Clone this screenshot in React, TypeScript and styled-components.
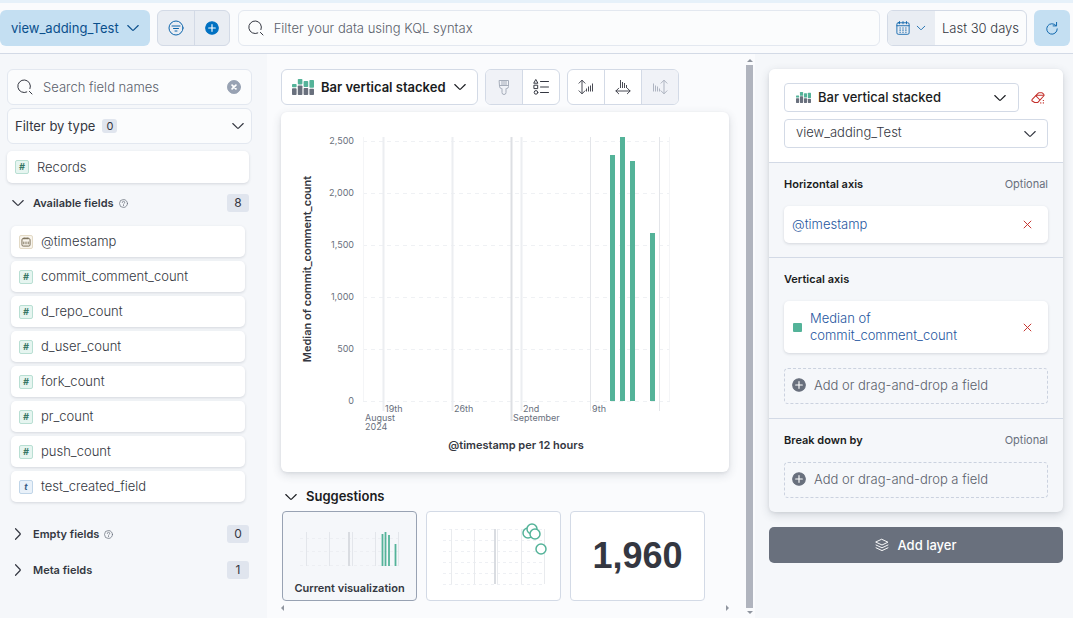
import React from "react";
import styled, { createGlobalStyle, css } from "styled-components";

const color = {
  text: "#343741",
  title: "#1a1c21",
  subdued: "#69707d",
  link: "#1f57a0",
  blue: "#0b64ab",
  border: "#d3dae6",
  page: "#f5f7fa",
  canvas: "#fafbfd",
  green: "#54b399",
  danger: "#c4302b",
};

const GlobalStyle = createGlobalStyle`
  *, *::before, *::after { box-sizing: border-box; }
  body {
    margin: 0;
    background: ${color.page};
    color: ${color.text};
    font-family: Inter, "Liberation Sans", sans-serif;
    font-size: 13px;
    font-weight: 300;
    line-height: 17px;
  }
  button, input, select { font: inherit; color: inherit; margin: 0; }
  button { cursor: pointer; padding: 0; border: 0; background: none; }
  h2, h3, ul { margin: 0; padding: 0; font: inherit; }
  ul { list-style: none; }
  svg { display: block; flex: none; }
`;

/* ---------- icons ---------- */

type IconProps = { size?: number; tone?: string };

const Stroke = styled.svg.attrs({ viewBox: "0 0 16 16", fill: "none", "aria-hidden": true })<{
  $size?: number;
  $tone?: string;
}>`
  width: ${(p) => p.$size ?? 16}px;
  height: ${(p) => p.$size ?? 16}px;
  color: ${(p) => p.$tone ?? "inherit"};
  stroke: currentColor;
  stroke-linecap: round;
  stroke-linejoin: round;
`;

const ChevronDown = ({ size = 14, tone }: IconProps) => (
  <Stroke $size={size} $tone={tone} strokeWidth={1.35}>
    <path d="M2 5.2l5.4 5.2a.9.9 0 0 0 1.2 0L14 5.2" />
  </Stroke>
);

const ChevronRight = ({ size = 14, tone }: IconProps) => (
  <Stroke $size={size} $tone={tone} strokeWidth={1.35}>
    <path d="M5.2 2l5.2 5.4a.9.9 0 0 1 0 1.2L5.2 14" />
  </Stroke>
);

const SearchIcon = () => (
  <Stroke $size={16} strokeWidth={1}>
    <path d="M9.8 13A6.3 6.3 0 1 1 13 9.6M12.4 12.4l2.6 2.6" />
  </Stroke>
);

const FilterIcon = () => (
  <Stroke $size={16} $tone={color.blue} strokeWidth={1}>
    <circle cx="8" cy="8" r="7" />
    <path d="M4 6h8M5.5 8.5h5M7 11h2" />
  </Stroke>
);

const PlusCircle = ({ size = 14, tone }: IconProps) => (
  <Stroke $size={size} $tone={tone} strokeWidth={1.3}>
    <circle cx="8" cy="8" r="7.2" fill="currentColor" />
    <path d="M8 4.2v7.6M4.2 8h7.6" stroke="#fff" />
  </Stroke>
);

const ClearIcon = () => (
  <Stroke $size={14} $tone="#98a2b3" strokeWidth={1}>
    <circle cx="8" cy="8" r="7.5" fill="currentColor" />
    <path d="M5.8 5.8l4.4 4.4M10.2 5.8l-4.4 4.4" stroke="#fff" strokeWidth={2} />
  </Stroke>
);

const CalendarIcon = () => (
  <Stroke $size={14} $tone={color.blue} strokeWidth={1}>
    <rect x="1" y="2" width="14" height="13.2" rx="1.6" />
    <path d="M1 5.4h14M4 .6v2.6M8 .6v2.6M12 .6v2.6" />
    <path
      d="M4 8h1.4M7.3 8h1.4M10.6 8H12M4 10.4h1.4M7.3 10.4h1.4M10.6 10.4H12M4 12.8h1.4M7.3 12.8h1.4M10.6 12.8H12"
      strokeLinecap="butt"
      strokeWidth={1.3}
    />
  </Stroke>
);

const RefreshIcon = () => (
  <Stroke $size={14} $tone={color.blue} strokeWidth={1.1}>
    <path d="M12.6 5.2A6 6 0 1 0 14 9M13.2 1.6v4H9.3" />
  </Stroke>
);

const HelpIcon = () => (
  <Stroke $size={9} $tone={color.subdued} strokeWidth={1.3}>
    <circle cx="8" cy="8" r="7.1" />
    <path d="M5.8 6.2A2.2 2.2 0 1 1 8.8 8.2c-.6.3-.8.6-.8 1.2M8 11.4v.6" />
  </Stroke>
);

const BrushIcon = () => (
  <Stroke $size={16} strokeWidth={1}>
    <path d="M3.5 1.5h9v6a2 2 0 0 1-2 2h-.5v4a2 2 0 0 1-4 0v-4h-.5a2 2 0 0 1-2-2zM3.5 6.5h9M6 1.5v5M8 1.5v5M10 1.5v5" />
  </Stroke>
);

const LegendIcon = () => (
  <Stroke $size={16} strokeWidth={1}>
    <path d="M7.5 2.5h8M7.5 8h8M7.5 13.5h8" />
    <path d="M3 .8l1.9 3.4H1.1zM1.3 6.2h3.4v3.4H1.3z" />
    <circle cx="3" cy="13.4" r="1.8" />
  </Stroke>
);

const AxisLeftIcon = () => (
  <Stroke $size={16} strokeWidth={0.9}>
    <path d="M4 1.5v13M1 4.2L4 1.2l3 3M1 11.8l3 3 3-3" />
    <path d="M8.5 9.5v3M10.5 7.5v5M12.5 6.5v6M14.5 4.5v8" strokeLinecap="butt" />
  </Stroke>
);

const AxisBottomIcon = () => (
  <Stroke $size={16} strokeWidth={0.9}>
    <path d="M1 12h14M3.7 9.2L.9 12l2.8 2.8M12.3 9.2l2.8 2.8-2.8 2.8" />
    <path d="M5.5 1v8M7.5 3v6M9.5 4v5M11.5 6v3" strokeLinecap="butt" />
  </Stroke>
);

const AxisRightIcon = () => (
  <Stroke $size={16} strokeWidth={0.9}>
    <path d="M12 1.5v13M9 4.2l3-3 3 3M9 11.8l3 3 3-3" />
    <path d="M1.5 4.5v8M3.5 6.5v6M5.5 7.5v5M7.5 9.5v3" strokeLinecap="butt" />
  </Stroke>
);

const EraserIcon = () => (
  <Stroke $size={14} $tone={color.danger} strokeWidth={1.2}>
    <path d="M1.4 9.6L8 2.6a1.6 1.6 0 0 1 1.100-.5h3.200a1.600 1.600 0 0 1 1.200.5l1 1.200a1.400 1.400 0 0 1 0 1.900L7.600 13.200H4.200L1.400 11.500a1.300 1.300 0 0 1 0-1.900z" />
    <path d="M6.200 4.800h8M5.600 5.600l4.400 4.400" />
    <path d="M11 13.600h.3M14 13.600h.3M14 10.800h.3" strokeWidth={1.3} />
  </Stroke>
);

const CrossIcon = () => (
  <Stroke $size={11} $tone={color.danger} strokeWidth={1.4}>
    <path d="M3 3l10 10M13 3L3 13" />
  </Stroke>
);

const LayersIcon = () => (
  <Stroke $size={14} strokeWidth={1.1}>
    <path d="M8 1.6l6.8 3.2L8 8 1.2 4.8zM1.2 8L8 11.2 14.8 8M1.2 11.2L8 14.4l6.8-3.2" />
  </Stroke>
);

const StackedBarIcon = ({ width }: { width: number }) => (
  <svg width={width} viewBox="0 0 22 16" aria-hidden="true">
    <g fill={color.green}>
      <rect x="0" y="5" width="4.6" height="3.2" rx=".8" />
      <rect x="5.8" y="0" width="4.6" height="5.4" rx=".8" />
      <rect x="11.6" y="2" width="4.6" height="6" rx=".8" />
      <rect x="17.4" y="1" width="4.6" height="7.8" rx=".8" />
    </g>
    <g fill={color.subdued}>
      <rect x="0" y="9.2" width="4.6" height="6.8" rx=".8" />
      <rect x="5.8" y="6.4" width="4.6" height="9.6" rx=".8" />
      <rect x="11.6" y="9" width="4.6" height="7" rx=".8" />
      <rect x="17.4" y="9.8" width="4.6" height="6.2" rx=".8" />
    </g>
  </svg>
);

/* ---------- top bar ---------- */

const TopBar = styled.header`
  display: flex;
  gap: 7px;
  padding: 7px 3px 7px 0;
  border-top: 3px solid #e6f1fa;
  border-bottom: 1px solid ${color.border};
  background: ${color.canvas};
`;

const DataViewButton = styled.button`
  display: flex;
  align-items: center;
  gap: 7px;
  height: 36px;
  padding: 0 10px 0 11px;
  border-radius: 6px;
  background: #c4dff2;
  color: #0a4f8c;
  font-weight: 400;
`;

const SplitGroup = styled.div`
  display: flex;
  height: 36px;
  border: 1px solid ${color.border};
  border-radius: 6px;
  background: #e9edf3;
  overflow: hidden;
`;

const SplitButton = styled.button<{ $divided?: boolean }>`
  display: grid;
  place-items: center;
  width: ${(p) => (p.$divided ? 35 : 36)}px;
  ${(p) => p.$divided && css`border-left: 1px solid ${color.border};`}
`;

const SearchBox = styled.label<{ $grow?: boolean }>`
  display: flex;
  align-items: center;
  gap: 10px;
  height: 36px;
  padding: 0 10px 0 9px;
  border: 1px solid #e3e8f0;
  border-radius: 6px;
  background: #fbfcfd;
  ${(p) => p.$grow && css`flex: 1; margin-left: 1px;`}
`;

const SearchInput = styled.input`
  flex: 1;
  min-width: 0;
  padding: 0;
  border: 0;
  outline: 0;
  background: none;
  &::placeholder { color: #5a606b; opacity: 1; }
`;

const DateGroup = styled.div`
  display: flex;
  height: 36px;
  border: 1px solid ${color.border};
  border-radius: 6px;
  background: #fbfcfd;
  overflow: hidden;
`;

const DateQuick = styled.button`
  display: flex;
  align-items: center;
  gap: 6px;
  padding: 0 9px 0 8px;
  background: #e9edf3;
`;

const DateText = styled.button`
  padding: 0 7px;
`;

const RefreshButton = styled.button`
  display: grid;
  place-items: center;
  width: 36px;
  height: 36px;
  border-radius: 6px;
  background: #c4dff2;
`;

/* ---------- page columns ---------- */

const Columns = styled.main`
  display: grid;
  grid-template-columns: 267px minmax(0, 1fr) 9px 318px;
  min-height: calc(100vh - 54px);
`;

/* ---------- field list ---------- */

const FieldPanel = styled.aside`
  padding: 15px 15px 15px 7px;
`;

const FilterByType = styled.button`
  display: flex;
  align-items: center;
  width: 100%;
  height: 36px;
  margin: 3px 0 7px;
  padding: 0 6px 0 7px;
  border: 1px solid #e3e8f0;
  border-radius: 6px;
  background: #fbfcfd;
  font-weight: 400;
  svg { margin-left: auto; }
`;

const SmallBadge = styled.span`
  width: 15px;
  margin-left: 7px;
  border-radius: 3px;
  background: #e0e5ee;
  font-size: 11px;
  line-height: 14px;
  text-align: center;
`;

const FieldButton = styled.button<{ $nested?: boolean }>`
  display: flex;
  align-items: center;
  gap: 8px;
  width: ${(p) => (p.$nested ? "100%" : "calc(100% - 3px)")};
  height: ${(p) => (p.$nested ? 31 : 32)}px;
  padding: 0 8px;
  border-radius: 5px;
  background: #fff;
  box-shadow: 0 1px 3px rgba(40, 50, 70, 0.16);
`;

const FieldListItems = styled.ul`
  display: grid;
  gap: 4px;
  padding: 13px 7px 12px 4px;
`;

const tokenTones = {
  number: { fg: "#387765", bg: "#e6f5f0", line: "#b9dfd3" },
  date: { fg: "#7b705a", bg: "#f8f4ec", line: "#e3dac6" },
  text: { fg: "#3d5f86", bg: "#e9f1f9", line: "#c0d5e8" },
};

const Token = styled.span<{ $kind: keyof typeof tokenTones }>`
  display: grid;
  place-items: center;
  width: 14px;
  height: 14px;
  border: 1px solid ${(p) => tokenTones[p.$kind].line};
  border-radius: 2px;
  background: ${(p) => tokenTones[p.$kind].bg};
  color: ${(p) => tokenTones[p.$kind].fg};
  font-size: 9px;
  font-style: italic;
  font-weight: 700;
  line-height: 12px;
`;

const DateToken = () => (
  <Stroke $size={10} strokeWidth={1.6}>
    <rect x="1.5" y="2.5" width="13" height="12" rx="2" />
    <path d="M5 1v2M8 1v2M11 1v2M4.5 8v3M8 8v3M11.5 8v3" />
  </Stroke>
);

const GroupHeader = styled.button<{ $spaced?: boolean }>`
  display: flex;
  align-items: center;
  width: calc(100% - 3px);
  height: 20px;
  margin-top: ${(p) => (p.$spaced ? 16 : 10)}px;
  padding: 0 0 0 4px;
`;

const GroupTitle = styled.span`
  margin: 0 5px 0 8px;
  font-size: 11px;
  font-weight: 600;
`;

const CountBadge = styled.span`
  width: 22px;
  margin-left: auto;
  border-radius: 3px;
  background: #e0e5ee;
  font-size: 12px;
  font-weight: 400;
  line-height: 18px;
  text-align: center;
`;

/* ---------- visualization ---------- */

const Workspace = styled.section`
  padding: 15px 17px 0 14px;
  background: ${color.canvas};
  min-width: 0;
`;

const Toolbar = styled.div`
  display: flex;
  gap: 7px;
  margin-bottom: 7px;
`;

const ChartTypeButton = styled.button<{ $compact?: boolean }>`
  display: flex;
  align-items: center;
  gap: 7px;
  height: ${(p) => (p.$compact ? 29 : 36)}px;
  padding: 0 ${(p) => (p.$compact ? 11 : 10)}px;
  border: 1px solid ${color.border};
  border-radius: ${(p) => (p.$compact ? 4 : 6)}px;
  background: #fff;
  color: ${color.title};
  font-weight: ${(p) => (p.$compact ? 500 : 600)};
  ${(p) => p.$compact && css`flex: 1;`}
  svg:last-child { margin-left: ${(p) => (p.$compact ? "auto" : "0")}; }
`;

const ToolGroup = styled.div`
  display: flex;
  height: 36px;
  border: 1px solid ${color.border};
  border-radius: 6px;
  background: #fff;
  overflow: hidden;
`;

const ToolButton = styled.button`
  display: grid;
  place-items: center;
  width: 36px;
  color: ${color.text};
  & + & { width: 37px; border-left: 1px solid ${color.border}; }
  &:disabled { background: #f0f2f7; color: #a6adba; }
`;

const ChartPanel = styled.div`
  border-radius: 6px;
  background: #fff;
  box-shadow: 0 3px 10px rgba(50, 60, 80, 0.16), 0 1px 3px rgba(50, 60, 80, 0.08);
`;

const ChartSvg = styled.svg`
  width: 100%;
  height: 360px;
  font-size: 9px;
  font-weight: 400;
  fill: ${color.subdued};
`;

const AxisTitle = styled.text`
  font-size: 11px;
  font-weight: 600;
  fill: #343741;
  text-anchor: middle;
`;

const bars = [
  { x: 329, value: 2365 },
  { x: 339, value: 2540 },
  { x: 349, value: 2308 },
  { x: 369, value: 1612 },
];
const yTicks = [0, 500, 1000, 1500, 2000, 2500];
const yFor = (value: number) => Math.round(289 - (value * 260) / 2500);

const Chart = () => (
  <ChartSvg viewBox="0 0 448 360" role="img" aria-label="Median of commit_comment_count by @timestamp per 12 hours">
    {yTicks.map((tick) => (
      <g key={tick}>
        <path d={`M82 ${yFor(tick) + 0.5}H389`} stroke="#eff1f4" strokeDasharray="4 4" />
        <text x="73" y={yFor(tick) + 3} textAnchor="end">{tick.toLocaleString("en-US")}</text>
      </g>
    ))}
    <path d="M82.5 25V289M388.5 25V289" stroke="#f4f5f7" />
    <path d="M102.5 25V299M171.5 25V299M240.5 25V299" stroke="#eceef1" strokeWidth="2" />
    <path d="M309.5 25V299M378.5 25V299" stroke="#e3e5e9" />
    <path d="M230.5 25V309" stroke="#dddfe3" strokeWidth="2" />
    {bars.map((bar) => (
      <rect key={bar.x} x={bar.x} y={yFor(bar.value)} width="5" height={289 - yFor(bar.value)} fill={color.green} />
    ))}
    <text x="104" y="300">19th</text>
    <text x="173" y="300">26th</text>
    <text x="242" y="300">2nd</text>
    <text x="311" y="300">9th</text>
    <text x="84" y="309">August</text>
    <text x="84" y="318">2024</text>
    <text x="232" y="309">September</text>
    <AxisTitle x="235" y="337">@timestamp per 12 hours</AxisTitle>
    <AxisTitle transform="translate(30 157) rotate(-90)">Median of commit_comment_count</AxisTitle>
  </ChartSvg>
);

const SuggestionsHeader = styled.button`
  display: flex;
  align-items: center;
  gap: 8px;
  margin: 16px 0 6px 3px;
  color: ${color.title};
  font-weight: 600;
`;

const SuggestionList = styled.div`
  display: flex;
  gap: 9px;
  padding-left: 1px;
`;

const SuggestionCard = styled.button<{ $selected?: boolean }>`
  display: grid;
  place-items: center;
  align-content: ${(p) => (p.$selected ? "end" : "center")};
  width: 135px;
  height: 90px;
  border: 1px solid ${(p) => (p.$selected ? "#98a2b3" : color.border)};
  border-radius: 4px;
  background: ${(p) => (p.$selected ? color.page : "#fff")};
`;

const SuggestionLabel = styled.span`
  padding-bottom: 3px;
  font-size: 11px;
  font-weight: 600;
`;

const Metric = styled.strong`
  color: ${color.text};
  font-family: "Liberation Sans", Arial, sans-serif;
  font-size: 36px;
  font-weight: 700;
  line-height: 40px;
`;

const MiniBars = () => (
  <svg width="100" height="48" viewBox="0 0 100 48" aria-hidden="true">
    <path d="M0 6.5H98M0 19.5H98M0 33.5H98" stroke="#edeff3" strokeDasharray="3 3" />
    <path d="M6.5 0V34M29.5 0V34M52.5 0V34M75.5 0V34M98.5 0V34" stroke="#e3e6eb" />
    <path d="M49 0V34" stroke="#d9dce1" strokeWidth="2" />
    <path d="M82.5 2V34M85.5 0V34M89 3V34M95.5 12V34" stroke={color.green} strokeWidth="1.8" />
  </svg>
);

const MiniScatter = () => (
  <svg width="106" height="72" viewBox="0 0 106 72" aria-hidden="true">
    <path d="M2 9.5H104M2 20.5H104M2 31.5H104M2 42.5H104M2 53.5H104M2 64.5H104" stroke="#eef0f4" strokeDasharray="3 3" />
    <path d="M10.5 9V64M33.5 9V64M56.5 9V64M80.5 9V64M103.5 9V64" stroke="#e9ebee" />
    <path d="M54 9V64" stroke="#d9dce1" strokeWidth="2" />
    <g fill="#fff" stroke={color.green} strokeWidth="1.5">
      <circle cx="87" cy="13" r="5" />
      <circle cx="91" cy="9" r="5" />
      <circle cx="94" cy="14" r="5" />
      <circle cx="100" cy="29" r="5" />
    </g>
  </svg>
);

const Arrow = styled.i<{ $dir: "left" | "right" | "up" | "down" }>`
  width: 0;
  height: 0;
  border: 3px solid transparent;
  ${(p) => p.$dir === "left" && css`border-left: 0; border-right-color: #8f959f;`}
  ${(p) => p.$dir === "right" && css`border-right: 0; border-left-color: #8f959f;`}
  ${(p) => p.$dir === "up" && css`border-top: 0; border-bottom-color: #8f959f;`}
  ${(p) => p.$dir === "down" && css`border-bottom: 0; border-top-color: #8f959f;`}
`;

const HorizontalScroll = styled.div`
  display: flex;
  justify-content: space-between;
  padding: 4px 0 6px;
`;

const VerticalScroll = styled.div`
  display: flex;
  flex-direction: column;
  align-items: center;
  gap: 3px;
  padding: 5px 2px 4px 0;
  background: ${color.canvas};
`;

const ScrollThumb = styled.div`
  flex: 1;
  width: 7px;
  background: #b0b4be;
`;

/* ---------- layer settings ---------- */

const ConfigColumn = styled.aside`
  padding: 15px 10px 15px 14px;
`;

const LayerCard = styled.section`
  border-radius: 6px;
  background: ${color.page};
  box-shadow: 0 3px 10px rgba(50, 60, 80, 0.18), 0 1px 3px rgba(50, 60, 80, 0.08);
  overflow: hidden;
`;

const LayerHeader = styled.div`
  display: grid;
  gap: 7px;
  padding: 14px 15px;
  background: #fff;
`;

const LayerRow = styled.div`
  display: flex;
  align-items: center;
`;

const IconButton = styled.button<{ $wide?: boolean }>`
  display: grid;
  place-items: center;
  flex: none;
  width: ${(p) => (p.$wide ? 29 : 20)}px;
  height: 19px;
  ${(p) => p.$wide && css`padding-left: 9px;`}
`;

const SelectWrap = styled.label`
  display: grid;
  grid-template-columns: 1fr;
  align-items: center;
  & > * { grid-area: 1 / 1; }
  svg { justify-self: end; margin-right: 11px; pointer-events: none; }
`;

const Select = styled.select`
  appearance: none;
  width: 100%;
  height: 29px;
  padding: 0 30px 2px 11px;
  border: 1px solid ${color.border};
  border-radius: 4px;
  background: #fff;
`;

const Dimension = styled.section`
  padding: 11px 15px 14px;
  border-top: 1px solid ${color.border};
`;

const DimensionHead = styled.div`
  display: flex;
  justify-content: space-between;
  align-items: center;
  height: 20px;
  margin-bottom: 12px;
  font-size: 11px;
  font-weight: 400;
`;

const DimensionTitle = styled.h3`
  color: ${color.title};
  font-weight: 600;
`;

const Optional = styled.span`
  color: ${color.subdued};
`;

const DimensionCard = styled.div`
  display: flex;
  align-items: center;
  gap: 8px;
  padding: 9px 11px 9px 8px;
  border-radius: 5px;
  background: #fff;
  box-shadow: 0 1px 3px rgba(40, 50, 70, 0.16);
`;

const DimensionLink = styled.a`
  flex: 1;
  min-width: 0;
  color: ${color.link};
  text-decoration: none;
`;

const Swatch = styled.span`
  flex: none;
  width: 9px;
  height: 9px;
  margin-left: 1px;
  border-radius: 1px;
  background: ${color.green};
`;

const DropTarget = styled.button<{ $stacked?: boolean }>`
  display: flex;
  align-items: center;
  gap: 8px;
  width: 100%;
  height: 36px;
  margin-top: ${(p) => (p.$stacked ? 15 : 0)}px;
  padding: 0 7px 2px;
  border: 1px dashed #cbd2df;
  border-radius: 4px;
  color: #5a606b;
`;

const AddLayer = styled.button`
  display: flex;
  align-items: center;
  justify-content: center;
  gap: 8px;
  width: 100%;
  height: 36px;
  margin-top: 15px;
  border-radius: 5px;
  background: ${color.subdued};
  color: #fff;
  font-weight: 500;
`;

const fields: { name: string; kind: keyof typeof tokenTones }[] = [
  { name: "@timestamp", kind: "date" },
  { name: "commit_comment_count", kind: "number" },
  { name: "d_repo_count", kind: "number" },
  { name: "d_user_count", kind: "number" },
  { name: "fork_count", kind: "number" },
  { name: "pr_count", kind: "number" },
  { name: "push_count", kind: "number" },
  { name: "test_created_field", kind: "text" },
];

const glyph = { number: "#", date: <DateToken />, text: "t" };

export default function App() {
  return (
    <>
      <GlobalStyle />
      <TopBar>
        <DataViewButton>view_adding_Test <ChevronDown /></DataViewButton>
        <SplitGroup>
          <SplitButton aria-label="Saved queries"><FilterIcon /></SplitButton>
          <SplitButton $divided aria-label="Add filter"><PlusCircle tone="#0071c2" /></SplitButton>
        </SplitGroup>
        <SearchBox $grow>
          <SearchIcon />
          <SearchInput aria-label="Query" placeholder="Filter your data using KQL syntax" />
        </SearchBox>
        <DateGroup>
          <DateQuick aria-label="Date quick select">
            <CalendarIcon />
            <ChevronDown size={10} tone={color.blue} />
          </DateQuick>
          <DateText>Last 30 days</DateText>
        </DateGroup>
        <RefreshButton aria-label="Refresh"><RefreshIcon /></RefreshButton>
      </TopBar>

      <Columns>
        <FieldPanel>
          <SearchBox>
            <SearchIcon />
            <SearchInput aria-label="Search field names" placeholder="Search field names" />
            <button aria-label="Clear search"><ClearIcon /></button>
          </SearchBox>
          <FilterByType>
            Filter by type <SmallBadge>0</SmallBadge>
            <ChevronDown />
          </FilterByType>
          <FieldButton><Token $kind="number">#</Token>Records</FieldButton>

          <GroupHeader aria-expanded="true">
            <ChevronDown />
            <GroupTitle>Available fields</GroupTitle>
            <HelpIcon />
            <CountBadge>8</CountBadge>
          </GroupHeader>
          <FieldListItems>
            {fields.map((field) => (
              <li key={field.name}>
                <FieldButton $nested>
                  <Token $kind={field.kind}>{glyph[field.kind]}</Token>
                  {field.name}
                </FieldButton>
              </li>
            ))}
          </FieldListItems>
          <GroupHeader aria-expanded="false">
            <ChevronRight />
            <GroupTitle>Empty fields</GroupTitle>
            <HelpIcon />
            <CountBadge>0</CountBadge>
          </GroupHeader>
          <GroupHeader $spaced aria-expanded="false">
            <ChevronRight />
            <GroupTitle>Meta fields</GroupTitle>
            <CountBadge>1</CountBadge>
          </GroupHeader>
        </FieldPanel>

        <Workspace>
          <Toolbar>
            <ChartTypeButton>
              <StackedBarIcon width={22} /> Bar vertical stacked <ChevronDown />
            </ChartTypeButton>
            <ToolGroup>
              <ToolButton disabled aria-label="Visual options"><BrushIcon /></ToolButton>
              <ToolButton aria-label="Legend"><LegendIcon /></ToolButton>
            </ToolGroup>
            <ToolGroup>
              <ToolButton aria-label="Left axis"><AxisLeftIcon /></ToolButton>
              <ToolButton aria-label="Bottom axis"><AxisBottomIcon /></ToolButton>
              <ToolButton disabled aria-label="Right axis"><AxisRightIcon /></ToolButton>
            </ToolGroup>
          </Toolbar>
          <ChartPanel><Chart /></ChartPanel>
          <SuggestionsHeader aria-expanded="true"><ChevronDown /> Suggestions</SuggestionsHeader>
          <SuggestionList>
            <SuggestionCard $selected>
              <MiniBars />
              <SuggestionLabel>Current visualization</SuggestionLabel>
            </SuggestionCard>
            <SuggestionCard aria-label="Scatter"><MiniScatter /></SuggestionCard>
            <SuggestionCard><Metric>1,960</Metric></SuggestionCard>
          </SuggestionList>
          <HorizontalScroll><Arrow $dir="left" /><Arrow $dir="right" /></HorizontalScroll>
        </Workspace>

        <VerticalScroll>
          <Arrow $dir="up" />
          <ScrollThumb />
          <Arrow $dir="down" />
        </VerticalScroll>

        <ConfigColumn>
          <LayerCard>
            <LayerHeader>
              <LayerRow>
                <ChartTypeButton $compact>
                  <StackedBarIcon width={15} /> Bar vertical stacked <ChevronDown />
                </ChartTypeButton>
                <IconButton $wide aria-label="Clear layer"><EraserIcon /></IconButton>
              </LayerRow>
              <SelectWrap>
                <Select aria-label="Data view"><option>view_adding_Test</option></Select>
                <ChevronDown />
              </SelectWrap>
            </LayerHeader>
            <Dimension>
              <DimensionHead>
                <DimensionTitle>Horizontal axis</DimensionTitle>
                <Optional>Optional</Optional>
              </DimensionHead>
              <DimensionCard>
                <DimensionLink href="#timestamp">@timestamp</DimensionLink>
                <IconButton aria-label="Remove @timestamp"><CrossIcon /></IconButton>
              </DimensionCard>
            </Dimension>
            <Dimension>
              <DimensionHead>
                <DimensionTitle>Vertical axis</DimensionTitle>
              </DimensionHead>
              <DimensionCard>
                <Swatch />
                <DimensionLink href="#median">Median of<br />commit_comment_count</DimensionLink>
                <IconButton aria-label="Remove median"><CrossIcon /></IconButton>
              </DimensionCard>
              <DropTarget $stacked><PlusCircle tone={color.subdued} /> Add or drag-and-drop a field</DropTarget>
            </Dimension>
            <Dimension>
              <DimensionHead>
                <DimensionTitle>Break down by</DimensionTitle>
                <Optional>Optional</Optional>
              </DimensionHead>
              <DropTarget><PlusCircle tone={color.subdued} /> Add or drag-and-drop a field</DropTarget>
            </Dimension>
          </LayerCard>
          <AddLayer><LayersIcon /> Add layer</AddLayer>
        </ConfigColumn>
      </Columns>
    </>
  );
}
